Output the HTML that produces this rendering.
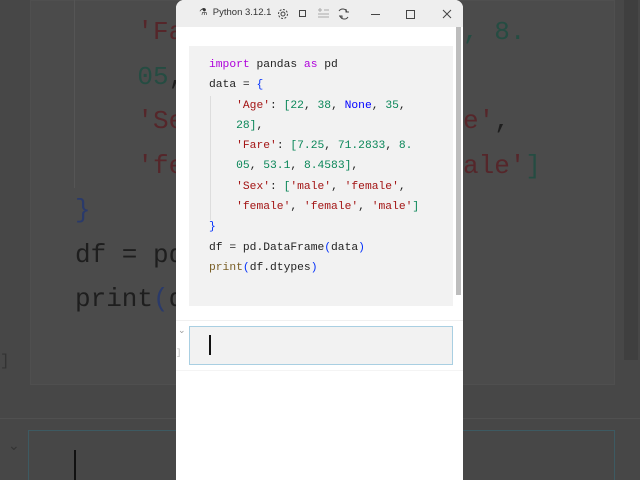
<!DOCTYPE html>
<html style="background:#474747"><head><style>
*{margin:0;padding:0;box-sizing:border-box}
html,body{width:640px;height:480px;overflow:hidden;background:#474747}
body{position:relative;font-family:"Liberation Mono",monospace}
.a{position:absolute}
.bgt{font-size:26px;color:#1e1e1e;white-space:pre;line-height:44.5px}
.r{color:#55262a}.g{color:#254c42}.b{color:#2a3a6a}
.win{left:176px;top:0;width:287px;height:480px;background:#fff;border-radius:8px 8px 0 0}
.code{font-size:11.3px;line-height:20.3px;white-space:pre;color:#222}
.code .r{color:#a31515}.code .g{color:#098658}.code .b{color:#0000ff}.code .p{color:#af00db}.code .br{color:#0431fa}
</style></head><body>
<div class="a" style="left:0;top:0;width:640px;height:480px;background:#474747"></div>
<div class="a" style="left:30px;top:0;width:585px;height:385px;background:#4b4b4b;border:1px solid #4f4f4f"></div>
<div class="a" style="left:0;top:418px;width:640px;height:1px;background:#505050"></div>
<div class="a" style="left:28px;top:430px;width:587px;height:60px;border:1px solid #3d5a62"></div>
<div class="a" style="left:624px;top:0;width:14px;height:360px;background:#3f3f3f"></div>
<div class="a" style="left:74px;top:0;width:1px;height:188px;background:#555"></div>
<div class="a" style="left:8px;top:438px;color:#333;font-size:14px;font-family:'DejaVu Sans'">⌄</div>
<div class="a" style="left:0;top:352px;color:#333;font-size:16px">]</div>
<div class="a" style="left:74px;top:450px;width:2px;height:30px;background:#111"></div>
<div class="a bgt" style="left:75px;top:10px"><span class="r">    'Fa</span>
<span class="g">    05</span>,
<span class="r">    'Se</span>
<span class="r">    'fe</span>
<span class="b">}</span>
df = pd
print<span class="b">(</span>d</div>
<div class="a bgt" style="left:463px;top:10px"><span class="g">,</span> <span class="g">8.</span>

<span class="r">e'</span>,
<span class="r">ale'</span><span class="g">]</span></div>
<div class="a win">
 <div class="a" style="left:0;top:0;width:287px;height:27px;background:#eeeeee;border-radius:8px 8px 0 0"></div>
 <div class="a" style="left:23px;top:7px;font-family:'Liberation Sans',sans-serif;font-size:9.5px;color:#333;white-space:nowrap">⚗&nbsp;&nbsp;Python 3.12.1</div>
 <svg class="a" style="left:100px;top:6px" width="187" height="16" viewBox="0 0 187 16" fill="none" stroke="#444" stroke-width="1">
  <circle cx="7" cy="8" r="2"/><circle cx="7" cy="8" r="4.5" stroke-dasharray="2 1.5"/>
  <rect x="23.5" y="4.5" width="6" height="6"/>
  <path d="M42 4h4M44 2v4M48 4h5M42 8h11M42 11h11" stroke="#aaa"/>
  <path d="M63 5a4.5 4.5 0 0 1 8 1M72 11a4.5 4.5 0 0 1-8-1M70 3v3h3M66 13v-3h-3"/>
  <path d="M95 8.5h9"/>
  <rect x="130.5" y="4.5" width="8" height="8"/>
  <path d="M167 4l8 8M175 4l-8 8"/>
 </svg>
 <div class="a" style="left:280px;top:27px;width:5px;height:268px;background:#bdbdbd"></div>
 <div class="a" style="left:13px;top:46px;width:264px;height:260px;background:#f2f2f2"></div>
 <div class="a" style="left:34px;top:96px;width:1px;height:124px;background:#ddd"></div>
 <div class="a code" style="left:33px;top:55px"><span class="p">import</span> pandas <span class="p">as</span> pd
data = <span class="br">{</span>
    <span class="r">'Age'</span>: <span class="g">[22</span>, <span class="g">38</span>, <span class="b">None</span>, <span class="g">35</span>,
    <span class="g">28]</span>,
    <span class="r">'Fare'</span>: <span class="g">[7.25</span>, <span class="g">71.2833</span>, <span class="g">8.</span>
    <span class="g">05</span>, <span class="g">53.1</span>, <span class="g">8.4583]</span>,
    <span class="r">'Sex'</span>: <span class="g">[</span><span class="r">'male'</span>, <span class="r">'female'</span>,
    <span class="r">'female'</span>, <span class="r">'female'</span>, <span class="r">'male'</span><span class="g">]</span>
<span class="br">}</span>
df = pd.DataFrame<span class="br">(</span>data<span class="br">)</span>
<span style="color:#795e26">print</span><span class="br">(</span>df.dtypes<span class="br">)</span></div>
 <div class="a" style="left:0;top:320px;width:287px;height:1px;background:#f0f0f0"></div>
 <div class="a" style="left:2px;top:326px;font-size:9px;color:#999;font-family:'DejaVu Sans'">⌄</div>
 <div class="a" style="left:0;top:348px;font-size:9px;color:#bbb">]</div>
 <div class="a" style="left:13px;top:326px;width:264px;height:39px;background:#f2f2f2;border:1px solid #a9cfe2"></div>
 <div class="a" style="left:33px;top:335px;width:2px;height:20px;background:#111"></div>
 <div class="a" style="left:0;top:370px;width:287px;height:1px;background:#f4f4f4"></div>
</div>
</body></html>
